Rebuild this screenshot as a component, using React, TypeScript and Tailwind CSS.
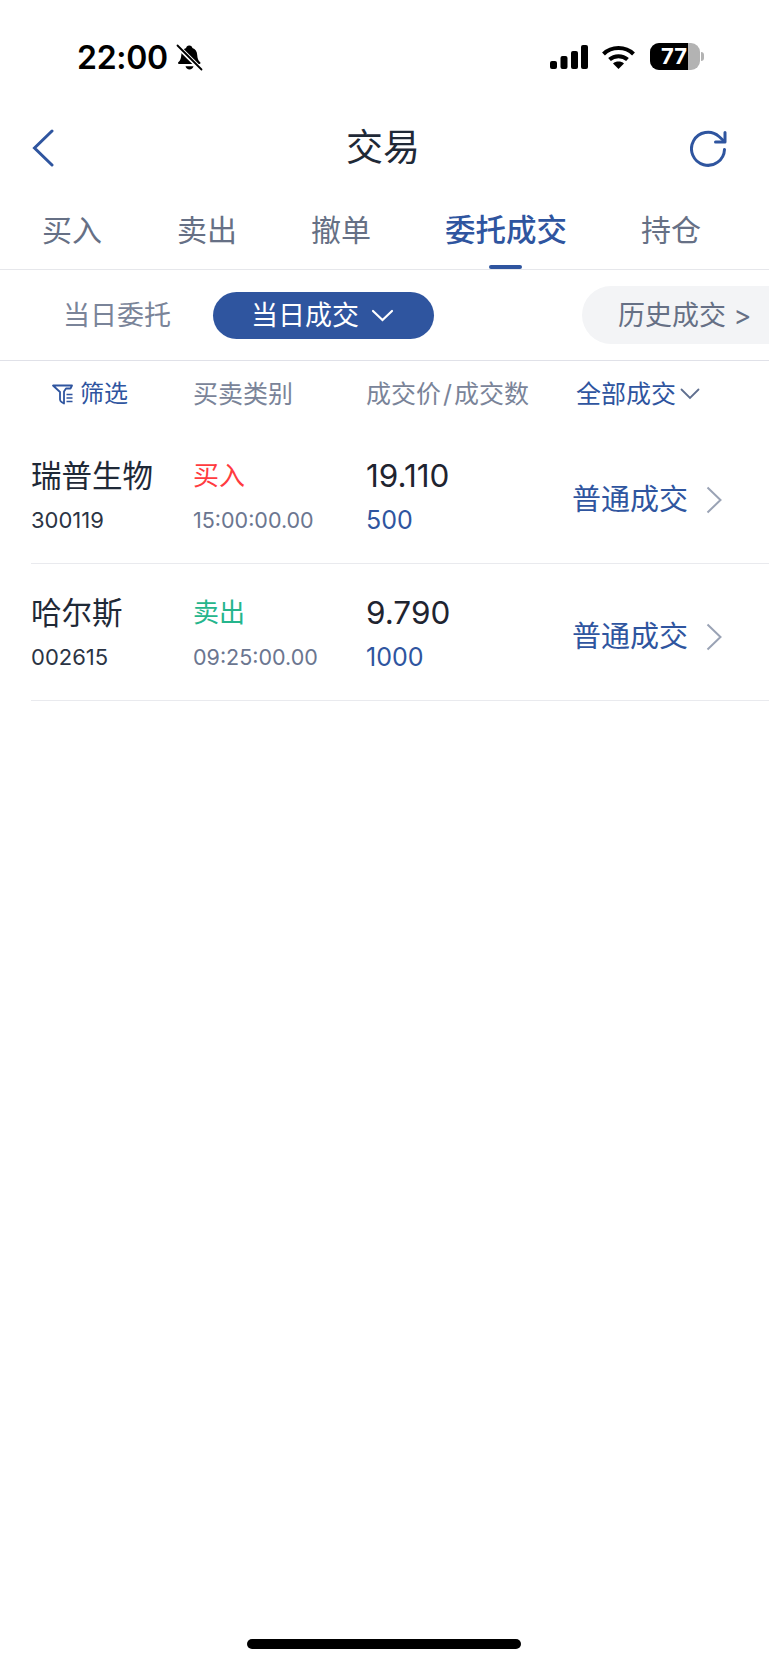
const trades = [
  { name: "瑞普生物", code: "300119", side: "买入", sideColor: "text-[#ff3b3f]", time: "15:00:00.00", price: "19.110", qty: "500" },
  { name: "哈尔斯", code: "002615", side: "卖出", sideColor: "text-[#25b58c]", time: "09:25:00.00", price: "9.790", qty: "1000" },
];

const tabs = [
  { label: "买入", cls: "w-[60px] ml-[42px]" },
  { label: "卖出", cls: "w-[60px] ml-[75px]" },
  { label: "撤单", cls: "w-[60px] ml-[74px]" },
  { label: "委托成交", cls: "w-[122px] ml-[74px]", active: true },
  { label: "持仓", cls: "w-[60px] ml-[74px]" },
];

function StatusBar() {
  return (
    <div className="h-[92px] pt-[42px] pl-[77px] pr-[65px] flex items-start text-black">
      <span className="text-[32px] leading-[31px] font-semibold tracking-[-0.3px]">22:00</span>
      {/* muted bell */}
      <svg className="ml-[8px] mt-[2px]" width="27" height="27" viewBox="0 0 27 27">
        <path d="M13.500 1.500c1.600 0 2.600 1 2.900 2.400 3 1 4.600 3.600 4.800 7 .2 3.400 1 5.400 3 7.400.6.7.3 1.700-.7 1.700H3c-1 0-1.300-1-.7-1.700 2-2 2.800-4 3-7.400.2-3.400 1.800-6 4.800-7 .3-1.400 1.300-2.400 2.900-2.400z" fill="#000" />
        <path d="M9.500 22.300h8c-.3 2-2 3.200-4 3.200s-3.700-1.200-4-3.200z" fill="#000" />
        <path d="M1 1.500 25.500 26" stroke="#fff" strokeWidth="4.500" />
        <path d="M1.500 1.500 25.500 25.500" stroke="#000" strokeWidth="1.800" strokeLinecap="round" />
      </svg>

      <svg className="ml-auto mt-[3px]" width="38" height="25" viewBox="0 0 38 25" fill="#000">
        <rect x="0" y="16" width="7" height="8" rx="2" />
        <rect x="10.500" y="11" width="7" height="13" rx="2" />
        <rect x="21" y="6" width="7" height="18" rx="2" />
        <rect x="31" y="0" width="7" height="24" rx="2" />
      </svg>
      <svg className="ml-[14px] mt-[3px]" width="33" height="25" viewBox="0 0 33 25" fill="none" stroke="#000" strokeWidth="4">
        <path d="M1.500 9C9.500 1 23.500 1 31.500 9" />
        <path d="M7.500 14.500c5-4.500 13-4.500 18 0" />
        <path d="M16.500 24 11 18.500c3-2.600 8-2.600 11 0z" fill="#000" stroke="none" />
      </svg>
      <div className="ml-[15px] mt-[1px] flex items-center">
        <div className="relative w-[50px] h-[27px] rounded-[9px] bg-[#b3b3b3] overflow-hidden">
          <div className="absolute inset-y-0 left-0 w-[38px] bg-black" />
          <span className="absolute inset-0 pl-[11px] text-white text-[22px] leading-[27px] font-bold">77</span>
        </div>
        <div className="ml-[1px] w-[3px] h-[9px] rounded-r-full bg-[#b3b3b3]" />
      </div>
    </div>
  );
}

function TradeRow({ t }: { t: (typeof trades)[number] }) {
  return (
    <div className="ml-[31px] h-[137px] border-b border-[#e9eaee] flex">
      <div className="w-[162px] pt-[29px]">
        <div className="text-[30.500px] leading-[40px] text-[#1f2937]">{t.name}</div>
        <div className="mt-[8px] text-[22px] leading-[32px] text-[#2b3444]">{t.code}</div>
      </div>
      <div className="w-[173px] pt-[29px]">
        <div className={`text-[26px] leading-[40px] ${t.sideColor}`}>{t.side}</div>
        <div className="mt-[8px] text-[21.500px] leading-[32px] text-[#6b7690]">{t.time}</div>
      </div>
      <div className="w-[207px] pt-[29px]">
        <div className="text-[31.500px] leading-[40px] text-[#1f2430]">{t.price}</div>
        <div className="mt-[8px] text-[25px] leading-[32px] text-[#2f559f]">{t.qty}</div>
      </div>
      <div className="flex-1 flex items-center pt-[10px] text-[#2f559f]">
        <span className="text-[29px] leading-[40px] -ml-[1px]">普通成交</span>
        <svg className="ml-[18px]" width="16" height="28" viewBox="0 0 16 28" fill="none" stroke="#9aa3b5" strokeWidth="2">
          <path d="M1.500 1.500 14.500 14 1.500 26.500" />
        </svg>
      </div>
    </div>
  );
}

export default function App() {
  return (
    <div className="relative w-full h-[1665px] overflow-hidden bg-white font-['Inter','Noto_Sans_CJK_SC',sans-serif]">
      <StatusBar />

      {/* Nav */}
      <div className="h-[80px] pt-[32px] flex items-center pl-[32px] pr-[42px]">
        <svg width="22" height="38" viewBox="0 0 22 38" fill="none" stroke="#2f559f" strokeWidth="3" strokeLinecap="round">
          <path d="M20 2 2.500 19 20 36" />
        </svg>
        <span className="ml-[292px] text-[37px] leading-[42px] text-[#1f2937]">交易</span>
        <svg className="ml-auto" width="37" height="37" viewBox="0 0 37 37" fill="none" stroke="#2f559f" strokeWidth="3" strokeLinecap="round" strokeLinejoin="round">
          <path d="M34.500 19.500A16.500 16.500 0 1 1 29 6.500l5.500 5" />
          <path d="M35 2.500v9.500h-9.500" />
        </svg>
      </div>

      {/* Tabs */}
      <div className="h-[98px] flex border-b border-[#e6e7eb]">
        {tabs.map((tab) => (
          <div key={tab.label} className={`relative shrink-0 pt-[38px] text-center whitespace-nowrap ${tab.cls}`}>
            <span className={tab.active ? "text-[30.500px] leading-[40px] font-medium text-[#2f559f]" : "text-[30px] leading-[40px] text-[#667085]"}>
              {tab.label}
            </span>
            {tab.active && <div className="absolute bottom-0 left-[44px] w-[33px] h-[4px] rounded-full bg-[#2f559f]" />}
          </div>
        ))}
      </div>

      {/* Sub tabs */}
      <div className="h-[91px] border-b border-[#e0e1e8] flex items-center overflow-hidden">
        <span className="ml-[63px] pt-[1px] shrink-0 whitespace-nowrap text-[27px] leading-[40px] text-[#7a8499]">当日委托</span>
        <div className="ml-[42px] shrink-0 w-[221px] h-[47px] rounded-full bg-[#2f559f] flex items-center pl-[38px] text-white">
          <span className="pt-[1px] whitespace-nowrap text-[27px] leading-[40px]">当日成交</span>
          <svg className="ml-[12px]" width="23" height="13" viewBox="0 0 23 13" fill="none" stroke="#fff" strokeWidth="2.200" strokeLinecap="round">
            <path d="M2 2 11.500 11 21 2" />
          </svg>
        </div>
        <div className="ml-[148px] w-[240px] h-[58px] shrink-0 rounded-full bg-[#f3f4f6] flex items-center pl-[36px] text-[#667085]">
          <span className="pt-[1px] text-[27px] leading-[40px] whitespace-nowrap">历史成交 &gt;</span>
        </div>
      </div>

      {/* Column headers */}
      <div className="h-[66px] flex items-center text-[25px] text-[#7a8499]">
        <div className="ml-[52px] w-[141px] flex items-center text-[#2f559f]">
          <svg width="22" height="21" viewBox="0 0 22 21" fill="none" stroke="#2f559f" strokeWidth="1.800" strokeLinejoin="round">
            <path d="M1 1.500h19l-1.500 3H14l-2 3V19.500l-2.500-1.500c-1-.6-1.500-1.400-1.500-2.500V8L1 1.500z" />
            <path d="M14.500 10.500h6M14.500 14h6M14.500 17.500h6" strokeWidth="1.600" />
          </svg>
          <span className="ml-[6px] text-[24px] leading-[32px]">筛选</span>
        </div>
        <span className="w-[173px] leading-[32px]">买卖类别</span>
        <span className="w-[210px] leading-[32px] whitespace-nowrap">
          成交价<span className="mx-[2px]">/</span>成交数
        </span>
        <span className="leading-[32px] text-[#2f559f]">全部成交</span>
        <svg className="ml-[4px]" width="20" height="12" viewBox="0 0 20 12" fill="none" stroke="#5f6f8f" strokeWidth="1.800" strokeLinecap="round">
          <path d="M1.500 1.500 10 10l8.500-8.500" />
        </svg>
      </div>

      {/* Trades */}
      <div>
        {trades.map((t) => (
          <TradeRow key={t.code} t={t} />
        ))}
      </div>

      {/* Home indicator */}
      <div className="absolute left-[247px] top-[1639px] w-[274px] h-[10px] rounded-full bg-black" />
    </div>
  );
}
